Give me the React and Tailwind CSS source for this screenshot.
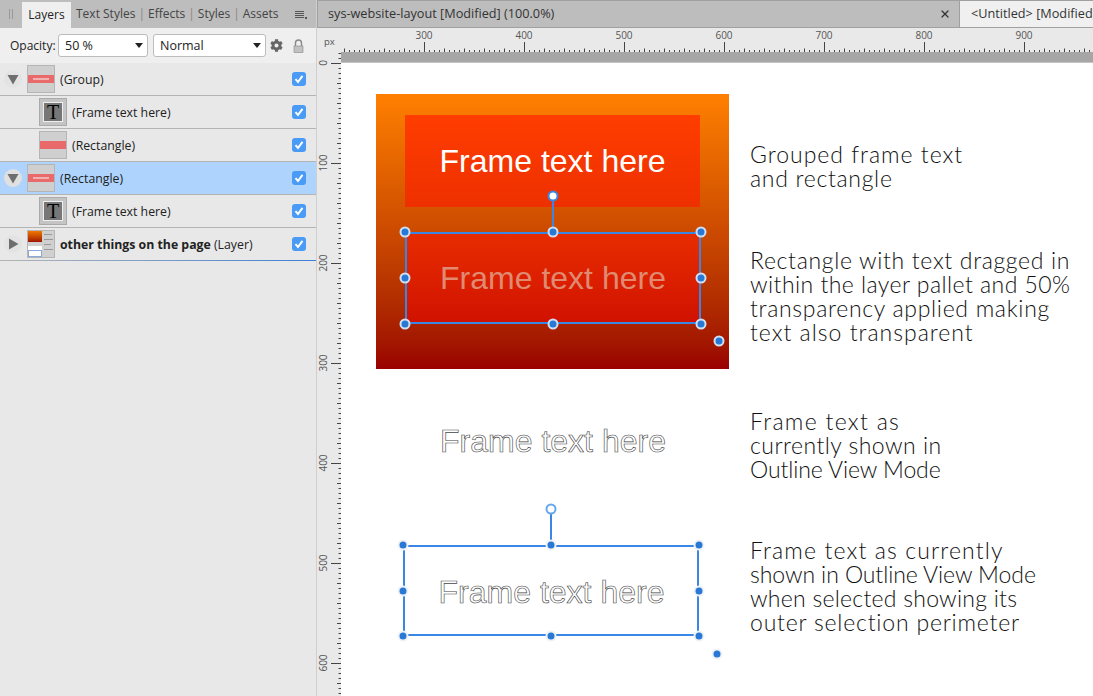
import { X } from "lucide-react";
import { FaCog } from "react-icons/fa";

const noteFont = "font-['Lato'] font-light text-[23px] leading-[24px] text-[#111] whitespace-pre";
const uiFont = "font-['Open_Sans','Noto_Sans',sans-serif]";
const frameFont = "font-['Liberation_Sans',sans-serif] text-[32px]";

function Check() {
  return (
    <div className="w-[14px] h-[14px] rounded-[3px] bg-[#4a9bf5] flex items-center justify-center">
      <svg width="10" height="10" viewBox="0 0 10 10">
        <path d="M1.5 5.2 L4 8 L8.5 1.8" fill="none" stroke="#fff" strokeWidth="2" />
      </svg>
    </div>
  );
}

function Thumb({ kind }) {
  if (kind === "text") {
    return (
      <div className="w-[28px] h-[28px] bg-[#c4c4c4] border border-[#aaa] p-[3px] shrink-0">
        <div className="w-full h-full bg-[#777] border border-[#eee] flex items-center justify-center font-['Liberation_Serif',serif] text-[20px] leading-none text-black">
          T
        </div>
      </div>
    );
  }
  if (kind === "rect") {
    return (
      <div className="w-[28px] h-[28px] bg-[#cfcfcf] border border-[#b5b5b5] flex items-center shrink-0">
        <div className="w-full h-[8px] bg-[#e96a6a]" />
      </div>
    );
  }
  if (kind === "layer") {
    return (
      <div className="w-[28px] h-[28px] bg-[#d0d0d0] border border-[#b5b5b5] flex shrink-0 overflow-hidden">
        <div className="w-[14px] flex flex-col">
          <div className="h-[11px] bg-gradient-to-b from-[#f07800] to-[#a01000]" />
          <div className="h-[4px] bg-[#d0d0d0]" />
          <div className="h-[4px] bg-white" />
          <div className="h-[7px] bg-white border border-[#88aadd]" />
        </div>
        <div className="flex-1 flex flex-col gap-[4px] pt-[3px] pl-[2px]">
          <div className="w-[8px] h-px bg-[#999]" />
          <div className="w-[9px] h-px bg-[#999]" />
          <div className="w-[7px] h-px bg-[#999]" />
          <div className="w-[9px] h-px bg-[#999]" />
        </div>
      </div>
    );
  }
  return (
    <div className="w-[28px] h-[28px] bg-[#cfcfcf] border border-[#b5b5b5] flex items-center shrink-0">
      <div className="w-full h-[8px] bg-[#e96a6a] flex items-center justify-center">
        <div className="w-[16px] h-[2px] bg-[#f3b0b0]" />
      </div>
    </div>
  );
}

function Arrow({ dir, halo }) {
  return (
    <div className={`w-[18px] h-[18px] rounded-full flex items-center justify-center shrink-0 ${halo}`}>
      <svg width="14" height="14" viewBox="0 0 14 14">
        {dir === "down" ? (
          <path d="M1.5 3 H12.5 L7 12.5 Z" fill="#6e6e6e" />
        ) : (
          <path d="M3 1.5 V12.5 L12.5 7 Z" fill="#6e6e6e" />
        )}
      </svg>
    </div>
  );
}

function LayerRow({ indent, arrow, thumb, selected, children }) {
  return (
    <div
      className={`h-[33px] flex items-center border-b border-[#b4b4b4] pr-[10px] ${
        selected ? "bg-[#aed4fd]" : "bg-[#e8e8e8]"
      } ${indent ? "pl-[39px]" : "pl-[4px]"}`}
    >
      {arrow && <Arrow dir={arrow} halo={selected ? "bg-[#e0e0e0]" : "bg-[#e3e3e3]"} />}
      {arrow && <div className="w-[5px]" />}
      <Thumb kind={thumb} />
      <div className="flex-1 ml-[5px] pt-[2px] text-[12.3px] text-[#222] whitespace-nowrap">{children}</div>
      <Check />
    </div>
  );
}

function Select({ className, label }) {
  return (
    <div className={`h-[23px] bg-white border border-[#bcbcbc] rounded-[3px] flex items-center justify-between pl-[6px] pr-[4px] text-[12.5px] text-[#222] ${className}`}>
      <span className="pt-[1px]">{label}</span>
      <svg width="8" height="5" viewBox="0 0 8 5">
        <path d="M0 0 H8 L4 5 Z" fill="#222" />
      </svg>
    </div>
  );
}

function LayersPanel() {
  return (
    <div className={`w-[317px] shrink-0 bg-[#e8e8e8] border-r border-[#cfcfcf] flex flex-col ${uiFont}`}>
      <div className="h-[28px] bg-[#bdbdbd] flex items-end text-[12px] text-[#444] whitespace-nowrap">
        <div className="w-[22px] h-full flex items-center justify-center gap-[2px]">
          <div className="w-px h-[10px] bg-[#999]" />
          <div className="w-px h-[10px] bg-[#999]" />
        </div>
        <div className="w-[49px] h-[26px] bg-[#efefef] text-[#222] flex items-center justify-center">Layers</div>
        <div className="h-full flex items-center pl-[5px]">
          <span>Text Styles</span>
          <span className="mx-[3px] text-[#888]">|</span>
          <span>Effects</span>
          <span className="mx-[3px] text-[#888]">|</span>
          <span>Styles</span>
          <span className="mx-[3px] text-[#888]">|</span>
          <span>Assets</span>
        </div>
        <div className="ml-auto h-full flex items-center pr-[9px]">
          <div className="flex flex-col gap-px">
            <div className="w-[9px] h-px bg-[#555]" />
            <div className="w-[9px] h-px bg-[#555]" />
            <div className="w-[9px] h-px bg-[#555]" />
            <div className="w-[9px] h-px bg-[#555]" />
          </div>
          <div className="w-[2px] h-[2px] bg-[#555] self-center mt-[8px] ml-px" />
        </div>
      </div>

      <div className="h-[35px] bg-[#efefef] flex items-center pl-[10px] text-[12px] text-[#222]">
        <span className="w-[48px]">Opacity:</span>
        <Select className="w-[90px]" label="50 %" />
        <Select className="w-[113px] ml-[5px]" label="Normal" />
        <FaCog size={13} className="ml-[4px] text-[#666]" />
        <svg width="11" height="14" viewBox="0 0 11 14" className="ml-[10px]">
          <path d="M2.5 7 V4 a3 3 0 0 1 6 0 V7" fill="none" stroke="#888" strokeWidth="1.4" />
          <rect x="1" y="7" width="9" height="6.5" fill="#c2c2c2" stroke="#888" strokeWidth="0.6" />
        </svg>
      </div>

      <LayerRow arrow="down" thumb="frame">(Group)</LayerRow>
      <LayerRow indent thumb="text">(Frame text here)</LayerRow>
      <LayerRow indent thumb="rect">(Rectangle)</LayerRow>
      <LayerRow arrow="down" thumb="frame" selected>(Rectangle)</LayerRow>
      <LayerRow indent thumb="text">(Frame text here)</LayerRow>
      <LayerRow arrow="right" thumb="layer">
        <b>other things on the page</b> (Layer)
      </LayerRow>
      <div className="h-px bg-gradient-to-r from-[#b4b4b4] to-[#3a7fd5] -mt-px" />
    </div>
  );
}

function TabBar() {
  return (
    <div className={`h-[28px] flex bg-[#bdbdbd] border-y border-[#a0a0a0] text-[12.7px] text-[#333] whitespace-nowrap ${uiFont}`}>
      <div className="flex-1 flex items-center justify-between border-l border-[#a0a0a0] pl-[10px] pr-[8px]">
        <span>sys-website-layout [Modified] (100.0%)</span>
        <X size={12} strokeWidth={2.5} className="text-[#333]" />
      </div>
      <div className="w-[134px] bg-[#f0f0f0] flex items-center pl-[11px] overflow-hidden border-l border-[#a0a0a0]">
        &lt;Untitled&gt; [Modified]
      </div>
    </div>
  );
}

function tickLen(v) {
  return v % 20 === 0 ? 3.5 : 2;
}

function TopRuler() {
  // ruler value v sits at screen x = v + 124.5, the column starts at 317
  const ticks = [];
  for (let v = 220; v <= 980; v += 5) {
    const x = v + 124 - 317 + 0.5;
    ticks.push(<path key={v} d={`M${x} 24 V${24 - tickLen(v)}`} stroke="#444" />);
  }
  const majors = [300, 400, 500, 600, 700, 800, 900];
  return (
    <div className="h-[24px] bg-[#e9e9e9] shrink-0">
      <svg width="776" height="24" className="block">
        <text x="7" y="17" fontSize="9.5" fill="#555" fontFamily="Open Sans">px</text>
        {ticks}
        {majors.map((m) => (
          <g key={m}>
            <path d={`M${m + 124 - 317 + 0.5} 24 V14`} stroke="#444" />
            <text x={m + 124 - 317} y="11" fontSize="10" fill="#555" textAnchor="middle" fontFamily="Open Sans">{m}</text>
          </g>
        ))}
      </svg>
    </div>
  );
}

function LeftRuler() {
  const ticks = [];
  for (let v = -10; v <= 630; v += 5) {
    ticks.push(<path key={v} d={`M${24 - tickLen(v) - 0.5} ${v + 11.5} H24`} stroke="#444" />);
  }
  const majors = [0, 100, 200, 300, 400, 500, 600];
  return (
    <div className="w-[24px] bg-[#e9e9e9] shrink-0">
      <svg width="24" height="644" className="block">
        {ticks}
        {majors.map((m) => (
          <g key={m}>
            <path d={`M14 ${m + 11.5} H24`} stroke="#444" />
            <text
              x="7"
              y={m + 11}
              fontSize="10"
              fill="#555"
              textAnchor="middle"
              dominantBaseline="middle"
              fontFamily="Open Sans"
              transform={`rotate(-90 7 ${m + 11})`}
            >
              {m}
            </text>
          </g>
        ))}
      </svg>
    </div>
  );
}

// selection handles sit on top of the frame corners
function Handle({ className, ring }) {
  return (
    <div className={`absolute w-[11px] h-[11px] rounded-full -translate-x-1/2 -translate-y-1/2 bg-[#2a78d6] border-2 ${ring} ${className}`} />
  );
}

function Selection({ className, ring, rotate, extra }) {
  return (
    <div className={`absolute ${className}`}>
      <div className="absolute inset-0 border-2 border-[#3a86e4]" />
      <div className="absolute left-1/2 -top-[36px] h-[36px] w-[2px] -translate-x-1/2 bg-[#3a86e4]" />
      <div className={`absolute left-1/2 -top-[36px] w-[11px] h-[11px] -translate-x-1/2 -translate-y-1/2 rounded-full ${rotate}`} />
      <Handle ring={ring} className="left-0 top-0" />
      <Handle ring={ring} className="left-1/2 top-0" />
      <Handle ring={ring} className="left-full top-0" />
      <Handle ring={ring} className="left-0 top-1/2" />
      <Handle ring={ring} className="left-full top-1/2" />
      <Handle ring={ring} className="left-0 top-full" />
      <Handle ring={ring} className="left-1/2 top-full" />
      <Handle ring={ring} className="left-full top-full" />
      <Handle ring={ring} className={extra} />
    </div>
  );
}

function Canvas() {
  return (
    <div className="relative flex-1 overflow-hidden bg-white">
      <div className="h-[11px] bg-[#a6a6a6] border-b border-[#c4c4c4]" />

      {/* artwork, coordinates are page positions */}
      <div className="absolute left-[35px] top-[42px] w-[353px] h-[275px] bg-gradient-to-b from-[#ff8000] to-[#990000]" />
      <div className={`absolute left-[64px] top-[63px] w-[295px] h-[92px] bg-gradient-to-b from-[#ff3d00] to-[#ee3000] flex items-center justify-center text-white ${frameFont}`}>
        Frame text here
      </div>
      <div className={`absolute left-[64px] top-[180px] w-[296px] h-[92px] bg-gradient-to-b from-[#e82c00] to-[#d01000] flex items-center justify-center text-[#e08a72] ${frameFont}`}>
        Frame text here
      </div>
      <Selection
        className="left-[64px] top-[180px] w-[296px] h-[92px]"
        ring="border-[#cfe0f2]"
        rotate="bg-white border-2 border-[#3a86e4]"
        extra="left-[314px] top-[109px]"
      />

      <div className={`absolute left-[64px] top-[365px] w-[296px] text-center text-white [-webkit-text-stroke:0.6px_#444] ${frameFont}`}>
        Frame text here
      </div>

      <div className={`absolute left-[62px] top-[493px] w-[296px] h-[91px] flex items-center justify-center pl-[1px] pt-[2px] text-white [-webkit-text-stroke:0.6px_#444] ${frameFont}`}>
        Frame text here
      </div>
      <Selection
        className="left-[62px] top-[493px] w-[296px] h-[91px]"
        ring="border-[#eef2f7]"
        rotate="bg-white border-2 border-[#66a6ee]"
        extra="left-[314px] top-[109px]"
      />

      <div className={`absolute left-[409px] top-[90px] ${noteFont}`}>
        <div className="tracking-[1px]">Grouped frame text</div>
        <div className="tracking-[0.7px]">and rectangle</div>
      </div>
      <div className={`absolute left-[409px] top-[196px] ${noteFont}`}>
        <div className="tracking-[0.67px]">Rectangle with text dragged in</div>
        <div className="tracking-[0.45px]">within the layer pallet and 50%</div>
        <div className="tracking-[0.7px]">transparency applied making</div>
        <div className="tracking-[1px]">text also transparent</div>
      </div>
      <div className={`absolute left-[409px] top-[357px] ${noteFont}`}>
        <div className="tracking-[1.3px]">Frame text as</div>
        <div className="tracking-[0.47px]">currently shown in</div>
        <div className="tracking-[-0.1px]">Outline View Mode</div>
      </div>
      <div className={`absolute left-[409px] top-[486px] ${noteFont}`}>
        <div className="tracking-[1.13px]">Frame text as currently</div>
        <div className="tracking-[-0.08px]">shown in Outline View Mode</div>
        <div className="tracking-[0.26px]">when selected showing its</div>
        <div className="tracking-[0.8px]">outer selection perimeter</div>
      </div>
    </div>
  );
}

export default function App() {
  return (
    <div className="w-[1093px] h-[696px] flex overflow-hidden bg-[#e8e8e8]">
      <LayersPanel />
      <div className="flex-1 flex flex-col min-w-0">
        <TabBar />
        <TopRuler />
        <div className="flex-1 flex min-h-0">
          <LeftRuler />
          <Canvas />
        </div>
      </div>
    </div>
  );
}
